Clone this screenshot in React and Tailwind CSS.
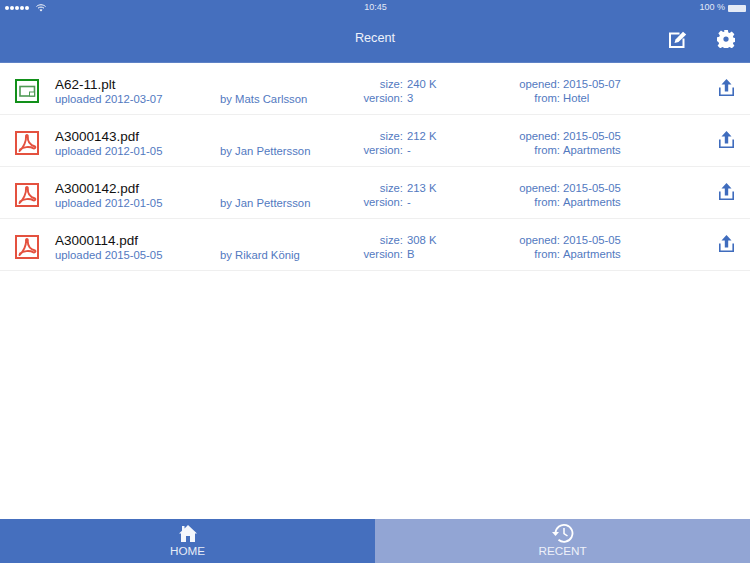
import React from 'react';

const files = [
  { name: 'A62-11.plt', type: 'plt', uploaded: '2012-03-07', by: 'Mats Carlsson', size: '240 K', version: '3', opened: '2015-05-07', from: 'Hotel' },
  { name: 'A3000143.pdf', type: 'pdf', uploaded: '2012-01-05', by: 'Jan Pettersson', size: '212 K', version: '-', opened: '2015-05-05', from: 'Apartments' },
  { name: 'A3000142.pdf', type: 'pdf', uploaded: '2012-01-05', by: 'Jan Pettersson', size: '213 K', version: '-', opened: '2015-05-05', from: 'Apartments' },
  { name: 'A3000114.pdf', type: 'pdf', uploaded: '2015-05-05', by: 'Rikard König', size: '308 K', version: 'B', opened: '2015-05-05', from: 'Apartments' },
];

function PltIcon() {
  return (
    <svg width="24" height="24" viewBox="0 0 24 24" fill="none" className="shrink-0">
      <rect x="1" y="1" width="22" height="22" stroke="#12901a" strokeWidth="2" />
      <rect x="5" y="7.500" width="14.500" height="9.500" stroke="#4f9a55" strokeWidth="1.600" />
      <rect x="14.500" y="13" width="5" height="4" fill="#fff" stroke="#4f9a55" strokeWidth="1" />
    </svg>
  );
}

function PdfIcon() {
  return (
    <svg width="24" height="24" viewBox="0 0 24 24" fill="none" className="shrink-0">
      <rect x="1" y="1" width="22" height="22" stroke="#e4513f" strokeWidth="2" />
      <path
        d="M4.500 20C8.500 16.500 11.500 10 11 5.500C10.800 3.500 13 3.500 12.800 5.500C12.500 10 15 14 20 15.500C21 16.500 20 17.800 18.500 17.300C14.500 15.300 8.500 15.800 5 18.500"
        stroke="#e4513f"
        strokeWidth="1.900"
        strokeLinejoin="round"
        strokeLinecap="round"
      />
    </svg>
  );
}

function ShareIcon() {
  return (
    <svg width="15" height="17" viewBox="0 0 15 17" fill="none" className="shrink-0">
      <path d="M7.500 0L12.500 5.500H9.200V12.500H5.800V5.500H2.500Z" fill="#3f6cbd" />
      <path d="M.8 8.500V16.200H14.200V8.500" stroke="#3f6cbd" strokeWidth="1.600" />
    </svg>
  );
}

function FileRow({ file }) {
  return (
    <div className="h-[52px] flex items-center border-b border-[#efefef] pt-[5px] pl-[15px] pr-[16px]">
      {file.type === 'plt' ? <PltIcon /> : <PdfIcon />}
      <div className="ml-4 w-[165px] shrink-0">
        <div className="text-[13.500px] leading-[15px] text-[#111]">{file.name}</div>
        <div className="text-[11.300px] leading-[14px] text-[#5279bf]">uploaded {file.uploaded}</div>
      </div>
      <div className="w-[135px] shrink-0 pt-[15px] text-[11.300px] leading-[14px] text-[#5279bf]">
        by {file.by}
      </div>
      <div className="w-[48px] shrink-0 text-right text-[11.300px] leading-[14px] text-[#5279bf]">
        <div>size:</div>
        <div>version:</div>
      </div>
      <div className="ml-1 w-[107px] shrink-0 text-[11.300px] leading-[14px] text-[#5279bf]">
        <div>{file.size}</div>
        <div>{file.version}</div>
      </div>
      <div className="w-[46px] shrink-0 text-right text-[11.300px] leading-[14px] text-[#5279bf]">
        <div className="whitespace-nowrap">opened:</div>
        <div>from:</div>
      </div>
      <div className="ml-[3px] text-[11.300px] leading-[14px] text-[#5279bf]">
        <div>{file.opened}</div>
        <div>{file.from}</div>
      </div>
      <div className="ml-auto -mt-[8px] flex">
        <ShareIcon />
      </div>
    </div>
  );
}

export default function App() {
  return (
    <div className="h-[563px] w-[750px] flex flex-col overflow-hidden bg-white font-['Liberation_Sans',sans-serif]">
      <header className="h-[63px] shrink-0 bg-[#456fbe] border-b border-[#5e82c6] text-white relative">
        <div className="h-[16px] flex items-center justify-between pl-[5px] pr-[4px] text-[9px] text-[#e4eaf6]">
          <div className="flex w-[200px] items-center gap-[7px]">
            <div className="flex gap-[1px]">
              <span className="w-[4px] h-[4px] rounded-full bg-white" />
              <span className="w-[4px] h-[4px] rounded-full bg-white" />
              <span className="w-[4px] h-[4px] rounded-full bg-white" />
              <span className="w-[4px] h-[4px] rounded-full bg-white" />
              <span className="w-[4px] h-[4px] rounded-full bg-white" />
            </div>
            <svg width="10" height="8" viewBox="0 0 10 8" fill="none">
              <path d="M.5 2.500C3 .2 7 .2 9.500 2.500" stroke="white" strokeWidth="1" />
              <path d="M2 4.200C3.700 2.700 6.300 2.700 8 4.200" stroke="white" strokeWidth="1" />
              <path d="M3.500 5.800C4.400 5 5.600 5 6.500 5.800L5 7.500Z" fill="white" />
            </svg>
          </div>
          <div>10:45</div>
          <div className="flex w-[200px] items-center justify-end gap-[3px]">
            <span>100 %</span>
            <span className="w-[18px] h-[7px] rounded-[1px] bg-[#e4eaf6]" />
          </div>
        </div>
        <div className="h-[46px] flex items-center justify-center text-[12.700px] text-[#eef2fa]">Recent</div>
        <div className="absolute left-[669px] top-[30px] flex items-center gap-[30px]">
          <svg width="18" height="17" viewBox="0 0 18 17" fill="none">
            <path d="M10.500 2.500H1V16H14.500V7.500" stroke="white" strokeWidth="2" />
            <path d="M5.500 12L6.500 8.500L14 0.800L17.200 3.500L9.500 11Z" fill="white" />
          </svg>
          <svg width="18" height="18" viewBox="0 0 24 24" fill="white">
            <path
              fillRule="evenodd"
              d="M9.500 0h5l.6 3.400c.6.200 1.200.4 1.700.7l2.900-2 3.500 3.500-2 2.900c.3.500.5 1.100.7 1.700l3.100.6v5l-3.100.6c-.2.600-.4 1.200-.7 1.700l2 2.900-3.500 3.500-2.900-2c-.5.300-1.100.5-1.700.7l-.6 3.300h-5l-.6-3.300c-.6-.2-1.200-.4-1.700-.7l-2.900 2-3.500-3.500 2-2.900c-.3-.5-.5-1.100-.7-1.700L0 14.500v-5l3.100-.6c.2-.6.4-1.200.7-1.700l-2-2.900 3.500-3.500 2.900 2c.5-.3 1.100-.5 1.700-.7L9.500 0zM12 8.500a3.500 3.500 0 100 7 3.500 3.500 0 000-7z"
            />
          </svg>
        </div>
      </header>

      <main className="flex-1">
        {files.map((file) => (
          <FileRow key={file.name} file={file} />
        ))}
      </main>

      <nav className="h-[44px] shrink-0 flex text-white text-[11.700px]">
        <div className="w-1/2 bg-[#456fbe] flex flex-col items-center pt-[6px]">
          <svg width="18" height="17" viewBox="0 0 18 17" fill="#f4f7fc">
            <path d="M9 0L18 8.500H16V17H11V11H7V17H2V8.500H0L3 5.700V1H5.500V3.400Z" />
          </svg>
          <div className="mt-[2px] leading-[13px] text-[#e6ecf7]">HOME</div>
        </div>
        <div className="w-1/2 bg-[#92a5d4] flex flex-col items-center pt-[4px]">
          <svg width="22" height="20" viewBox="0 0 22 20" fill="none">
            <path d="M3.500 10A8.500 8.500 0 1 1 6.500 16.800" stroke="white" strokeWidth="1.800" />
            <path d="M0 9H7L3.500 13Z" fill="white" />
            <path d="M12 5V10.500L15.500 13" stroke="white" strokeWidth="1.500" />
          </svg>
          <div className="mt-[1px] leading-[13px] text-[#eef1f9]">RECENT</div>
        </div>
      </nav>
    </div>
  );
}
